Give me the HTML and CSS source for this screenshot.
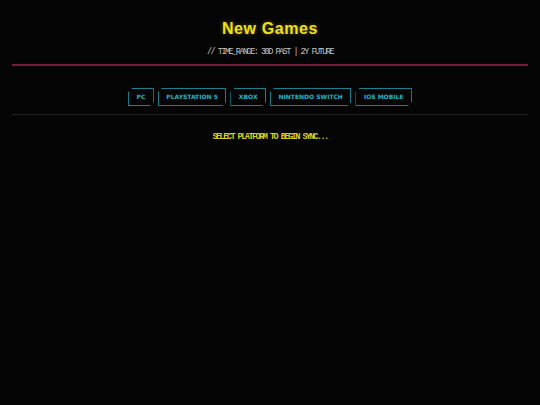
FILE: index.html
```html
<!DOCTYPE html>
<html lang="en">
<head>
  <meta charset="UTF-8">
  <meta name="viewport" content="width=device-width, initial-scale=1.0">
  <title>New Games</title>
  <link rel="stylesheet" href="styles.css">
</head>
<body>
  <div class="wrap">
    <header class="head">
      <h1 class="title">New Games</h1>
      <p class="sub">// TIME_RANGE: 30D PAST | 2Y FUTURE</p>
    </header>

    <nav class="platforms">
      <button class="plat">PC</button>
      <button class="plat">PLAYSTATION 5</button>
      <button class="plat">XBOX</button>
      <button class="plat">NINTENDO SWITCH</button>
      <button class="plat">IOS MOBILE</button>
    </nav>

    <div class="status">SELECT PLATFORM TO BEGIN SYNC...</div>
  </div>
</body>
</html>
```

FILE: styles.css
```css
body {
  background-color: #050505;
  margin: 0;
  padding: 0;
  font-family: 'Liberation Sans', sans-serif;
}
.wrap {
  padding: 0 12px;
}
.head {
  text-align: center;
  padding-top: 19px;
  padding-bottom: 7px;
  border-bottom: 2px solid #7a1c3c;
}
.title {
  margin: 0;
  font-size: 16px;
  line-height: 20px;
  font-weight: bold;
  letter-spacing: 0.6px;
  color: #f0e01c;
  text-shadow: 0 0 4px rgba(240, 224, 28, 0.35);
}
.sub {
  margin: 8px 0 0;
  font-family: 'Liberation Mono', monospace;
  font-size: 8.5px;
  line-height: 10px;
  letter-spacing: -1.5px;
  color: #c4c4c4;
}
.platforms {
  display: flex;
  justify-content: center;
  gap: 4px;
  padding: 22px 0 8px;
  border-bottom: 1px solid #222;
}
.plat {
  background: transparent;
  border: 1px solid #1d7f8c;
  color: #22b6c8;
  font-family: 'DejaVu Sans', sans-serif;
  font-weight: bold;
  font-size: 6px;
  line-height: 8px;
  padding: 4px 7.5px;
  margin: 0;
  cursor: pointer;
  /* chamfered corners, top-left and bottom-right */
  clip-path: polygon(4px 0, 100% 0, 100% calc(100% - 4px), calc(100% - 4px) 100%, 0 100%, 0 4px);
}
.status {
  margin-top: 17px;
  text-align: center;
  font-family: 'Liberation Mono', monospace;
  font-weight: bold;
  font-size: 8.5px;
  line-height: 10px;
  letter-spacing: -1.5px;
  color: #dcd41e;
}
```
